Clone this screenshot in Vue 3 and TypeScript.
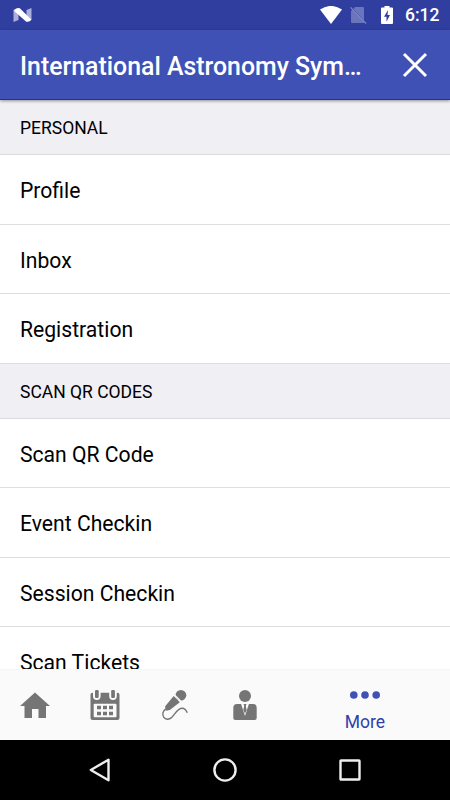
<script setup lang="ts">
interface Section {
  title: string
  items: string[]
}

const sections: Section[] = [
  { title: 'PERSONAL', items: ['Profile', 'Inbox', 'Registration'] },
  { title: 'SCAN QR CODES', items: ['Scan QR Code', 'Event Checkin', 'Session Checkin', 'Scan Tickets'] },
]
</script>

<template>
  <div class="screen">
    <div class="status">
      <svg class="n-logo" width="20" height="16" viewBox="0 0 20 16">
        <path d="M.5 2.500 5.500 5v8L.5 15zM13.500 3l5-2v12l-5 1.500z" fill="#abb0da" />
        <path d="M1 3Q4 .2 6.800 1.200L18.300 12.500Q16.500 15.600 13 14.500L1.500 4.200z" fill="#fff" />
      </svg>
      <span class="spacer"></span>
      <svg class="wifi" width="22" height="18" viewBox="0 0 22 18">
        <path d="M0 3.500Q11-3.700 22 3.500L11 18z" fill="#fff" />
      </svg>
      <svg class="sim" width="18" height="18" viewBox="0 0 18 18">
        <path d="M5 1h8q1 0 1 1v12.200L3.300 3zM1 5.500 12.500 17H2q-1 0-1-1z" fill="#6b75bb" />
        <path d="M1 5 2.500 3.600 14 15.300V17H2z" fill="#6b75bb" />
        <path d="M.6 1.300 16 17.500" stroke="#7c85c4" stroke-width="1.200" />
      </svg>
      <svg class="battery" width="12" height="18" viewBox="0 0 12 18">
        <path d="M3.500 0h5v1.500H11q1 0 1 1V17q0 1-1 1H1q-1 0-1-1V2.500q0-1 1-1h2.500z" fill="#fff" />
        <path d="M7 4 3 10.700h2.500v5L9 9H6.500z" fill="#303f9f" />
      </svg>
      <span class="clock">6:12</span>
    </div>

    <header class="header">
      <h1 class="title">International Astronomy Symposium</h1>
      <svg class="close" width="26" height="26" viewBox="0 0 26 26">
        <path d="M2 2 24 24M24 2 2 24" stroke="#fff" stroke-width="3" />
      </svg>
    </header>

    <main class="list">
      <section v-for="section in sections" :key="section.title">
        <h2 class="section-title">{{ section.title }}</h2>
        <div v-for="item in section.items" :key="item" class="row">{{ item }}</div>
      </section>
    </main>

    <nav class="tabs">
      <div class="tab">
        <svg width="30" height="32" viewBox="0 0 30 32">
          <path d="M15 3.500 30 17h-4v12h-7.500v-9h-6.500v9H4.500V17H0z" fill="#757575" />
        </svg>
      </div>
      <div class="tab">
        <svg width="30" height="32" viewBox="0 0 30 32">
          <path d="M2.500 3.800h25q2 0 2 2v23.200q0 2-2 2h-25q-2 0-2-2V5.800q0-2 2-2z" fill="#757575" />
          <path d="M3 3v4q0 4 3.800 4t3.800-4V3zM19.200 3v4q0 4 3.800 4t3.800-4V3z" fill="#fafafa" />
          <rect x="5" y="1" width="3.700" height="8" rx="1.200" fill="#757575" />
          <rect x="21.200" y="1" width="3.700" height="8" rx="1.200" fill="#757575" />
          <rect x="3.700" y="14.700" width="22.800" height="13.500" rx="1" fill="#fafafa" />
          <path d="M7 16.800h4v3.500H7zm6 0h4v3.500h-4zm6 0h4v3.500h-4zM7 22.700h4v3.500H7zm6 0h4v3.500h-4zm6 0h4v3.500h-4z" fill="#757575" />
        </svg>
      </div>
      <div class="tab">
        <svg width="30" height="32" viewBox="0 0 30 32">
          <circle cx="20.900" cy="6.300" r="5.400" fill="#757575" />
          <path d="M13.700 7 19.800 13.200 9.800 21 6 21.800 5 17.500z" fill="#757575" />
          <path d="m13.800 5.300 8 8" stroke="#fafafa" stroke-width="1.500" />
          <path d="M6 20C2.800 21.500 2 25.500 3.700 28.200c2 3 5.500 2.500 8.200 0 3.200-3 5.500-8.900 10.400-8.900 2.200 0 3.800 1.800 5 4.400" fill="none" stroke="#757575" stroke-width="1.400" />
        </svg>
      </div>
      <div class="tab">
        <svg width="30" height="32" viewBox="0 0 30 32">
          <circle cx="15" cy="7" r="6" fill="#757575" />
          <path d="M7 15h16q3.700 0 3.700 4v10q0 2-2 2H5.300q-2 0-2-2V19q0-4 3.700-4z" fill="#757575" />
          <path d="m10.800 14 4.200 13 4.200-13z" fill="#fafafa" />
          <path d="M13.500 15h3l-.7 2 .9 4L15 24.500 13.300 21l.9-4z" fill="#757575" />
        </svg>
      </div>
      <div class="tab more">
        <svg width="30" height="8" viewBox="0 0 30 8">
          <g fill="#3f51b5">
            <circle cx="3.800" cy="4" r="3.800" />
            <circle cx="15" cy="4" r="3.800" />
            <circle cx="26.200" cy="4" r="3.800" />
          </g>
        </svg>
        <span class="more-label">More</span>
      </div>
    </nav>

    <div class="system">
      <svg width="26" height="26" viewBox="0 0 26 26">
        <path d="M21.500 2.700v20.600L3.800 13z" />
      </svg>
      <svg width="26" height="26" viewBox="0 0 26 26">
        <circle cx="13" cy="13" r="10.600" />
      </svg>
      <svg width="26" height="26" viewBox="0 0 26 26">
        <rect x="3.500" y="3.500" width="19" height="19" rx=".5" />
      </svg>
    </div>
  </div>
</template>

<style>
body {
  overflow: hidden;
}
</style>

<style scoped>
.screen {
  display: flex;
  flex-direction: column;
  width: 450px;
  height: 800px;
  overflow: hidden;
  background: #fff;
  color: #000;
  font-family: Roboto, sans-serif;
}

svg {
  display: block;
  flex: none;
}

.status {
  display: flex;
  flex: none;
  align-items: center;
  box-sizing: border-box;
  height: 30px;
  padding: 0 10px 0 13px;
  background: #303f9f;
}

.spacer {
  flex: 1;
}

.sim {
  margin-left: 8px;
}

.battery {
  margin-left: 13px;
}

.clock {
  width: 35px;
  margin-left: 12px;
  color: #fff;
  font-size: 17.5px;
  font-weight: 500;
  line-height: 33px;
  white-space: nowrap;
}

.header {
  display: flex;
  flex: none;
  align-items: center;
  justify-content: space-between;
  z-index: 1;
  box-sizing: border-box;
  height: 70px;
  padding: 0 22px 0 20px;
  border-bottom: 1px solid #1b35a0;
  background: #3f51b5;
  box-shadow: 0 1px 3px rgba(0, 0, 0, 0.4);
}

.title {
  width: 345px;
  margin: 4px 0 0;
  overflow: hidden;
  color: #fff;
  font-size: 24.87px;
  font-weight: 500;
  line-height: 34px;
  text-overflow: ellipsis;
  white-space: nowrap;
}

.list {
  flex: 1;
  min-height: 0;
  overflow: hidden;
}

.section-title {
  box-sizing: border-box;
  height: 55px;
  margin: 0;
  padding-left: 20px;
  border-bottom: 1px solid #dcdcdf;
  background: #efeff4;
  font-size: 17.5px;
  font-weight: 400;
  line-height: 56px;
}

.row {
  box-sizing: border-box;
  height: 69.5px;
  padding-left: 20px;
  border-bottom: 1px solid #dedede;
  font-size: 21.15px;
  line-height: 71px;
}

.tabs {
  display: grid;
  flex: none;
  grid-template-columns: repeat(4, 70px) 170px;
  box-sizing: border-box;
  height: 71px;
  padding-top: 19px;
  border-top: 1px solid #f6f6f6;
  background: #fafafa;
}

.tab {
  display: flex;
  flex-direction: column;
  align-items: center;
}

.more {
  padding-top: 2px;
}

.more-label {
  margin-top: 11px;
  color: #303fa9;
  font-size: 17.5px;
  line-height: 24px;
}

.system {
  display: flex;
  flex: none;
  align-items: center;
  justify-content: space-between;
  box-sizing: border-box;
  height: 60px;
  padding: 0 87px;
  background: #000;
}

.system svg {
  fill: none;
  stroke: #eee;
  stroke-linejoin: round;
  stroke-width: 2.4;
}
</style>
